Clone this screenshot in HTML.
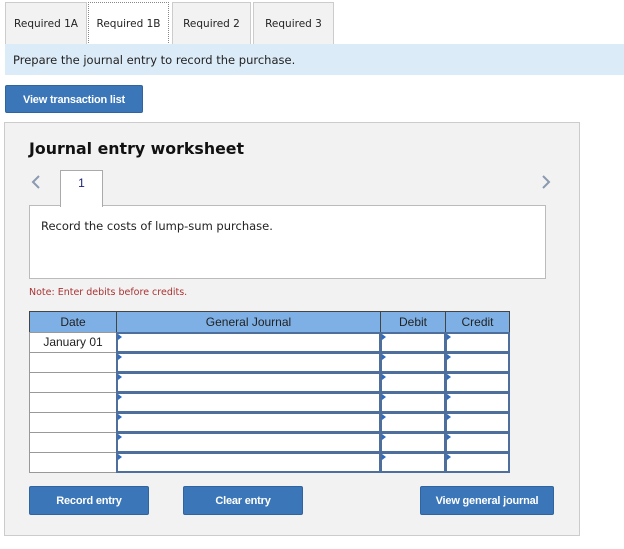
<!DOCTYPE html>
<html><head><meta charset="utf-8"><style>
*{box-sizing:border-box;margin:0;padding:0}
body{width:624px;height:549px;background:#fff;position:relative;overflow:hidden;font-family:"DejaVu Sans","Liberation Sans",sans-serif;color:#222}
.a{position:absolute}
.tab{position:absolute;top:2px;height:42px;background:#f2f2f2;border:1px solid #ccc;border-bottom:none;font-size:10.5px;line-height:42px;text-align:center;color:#222}
.btn{position:absolute;background:#3a76b8;border:1px solid #2f64a0;border-radius:2px;color:#fff;font-family:"Liberation Sans",sans-serif;font-weight:bold;font-size:11px;text-align:center;line-height:28px;letter-spacing:-0.2px}
.hd{position:absolute;top:311px;height:22px;background:#7eb0e6;border:1px solid #444;font-family:"Liberation Sans",sans-serif;font-size:12px;line-height:20px;text-align:center;color:#222}
.dc{position:absolute;left:29px;width:88px;height:21px;background:#fff;border:1px solid #999;font-family:"Liberation Sans",sans-serif;font-size:12px;line-height:18px;text-align:center}
.ic{position:absolute;height:21px;background:#fff;border:2px solid #4e6e9c}
.ic:before{content:"";position:absolute;left:0;top:0;border-left:4px solid #2f6bc0;border-top:3px solid transparent;border-bottom:3px solid transparent}
</style></head><body>
<div class="tab" style="left:5px;width:82px">Required 1A</div>
<div class="tab" style="left:88px;width:81px;background:#fff;border:1px dotted #888;border-bottom:none;height:43px">Required 1B</div>
<div class="tab" style="left:172px;width:79px">Required 2</div>
<div class="tab" style="left:253px;width:81px">Required 3</div>
<div class="a" style="left:5px;top:44px;width:619px;height:31px;background:#dcebf8;font-size:11.5px;line-height:32px;padding-left:8px">Prepare the journal entry to record the purchase.</div>
<div class="btn" style="left:5px;top:85px;width:138px;height:28px">View transaction list</div>
<div class="a" style="left:4px;top:122px;width:576px;height:414px;background:#f2f2f2;border:1px solid #ccc"></div>
<div class="a" style="left:29px;top:139px;font-size:15.8px;font-weight:bold;color:#111">Journal entry worksheet</div>
<svg class="a" style="left:31px;top:175px" width="10" height="14"><path d="M8 1 L2 7 L8 13" fill="none" stroke="#8a9ab0" stroke-width="2"/></svg>
<svg class="a" style="left:541px;top:175px" width="10" height="14"><path d="M2 1 L8 7 L2 13" fill="none" stroke="#8a9ab0" stroke-width="2"/></svg>
<div class="a" style="left:29px;top:205px;width:517px;height:74px;background:#fff;border:1px solid #bbb"></div>
<div class="a" style="left:60px;top:170px;width:43px;height:37px;background:#fff;border:1px solid #aaa;border-bottom:none;text-align:center;font-family:'Liberation Sans',sans-serif;font-size:12px;line-height:24px;color:#1a237e">1</div>
<div class="a" style="left:41px;top:219px;font-size:11.5px">Record the costs of lump-sum purchase.</div>
<div class="a" style="left:29px;top:287px;font-size:9.5px;color:#a33">Note: Enter debits before credits.</div>
<div class="hd" style="left:29px;width:88px">Date</div>
<div class="hd" style="left:116px;width:265px">General Journal</div>
<div class="hd" style="left:380px;width:66px">Debit</div>
<div class="hd" style="left:445px;width:65px">Credit</div>
<div class="dc" style="top:332px">January 01</div>
<div class="ic" style="left:116px;top:332px;width:265px"></div><div class="ic" style="left:380px;top:332px;width:66px"></div><div class="ic" style="left:445px;top:332px;width:65px"></div>
<div class="dc" style="top:352px"></div>
<div class="ic" style="left:116px;top:352px;width:265px"></div><div class="ic" style="left:380px;top:352px;width:66px"></div><div class="ic" style="left:445px;top:352px;width:65px"></div>
<div class="dc" style="top:372px"></div>
<div class="ic" style="left:116px;top:372px;width:265px"></div><div class="ic" style="left:380px;top:372px;width:66px"></div><div class="ic" style="left:445px;top:372px;width:65px"></div>
<div class="dc" style="top:392px"></div>
<div class="ic" style="left:116px;top:392px;width:265px"></div><div class="ic" style="left:380px;top:392px;width:66px"></div><div class="ic" style="left:445px;top:392px;width:65px"></div>
<div class="dc" style="top:412px"></div>
<div class="ic" style="left:116px;top:412px;width:265px"></div><div class="ic" style="left:380px;top:412px;width:66px"></div><div class="ic" style="left:445px;top:412px;width:65px"></div>
<div class="dc" style="top:432px"></div>
<div class="ic" style="left:116px;top:432px;width:265px"></div><div class="ic" style="left:380px;top:432px;width:66px"></div><div class="ic" style="left:445px;top:432px;width:65px"></div>
<div class="dc" style="top:452px"></div>
<div class="ic" style="left:116px;top:452px;width:265px"></div><div class="ic" style="left:380px;top:452px;width:66px"></div><div class="ic" style="left:445px;top:452px;width:65px"></div>
<div class="btn" style="left:29px;top:486px;width:120px;height:29px">Record entry</div>
<div class="btn" style="left:183px;top:486px;width:120px;height:29px">Clear entry</div>
<div class="btn" style="left:420px;top:486px;width:134px;height:29px">View general journal</div>
</body></html>
